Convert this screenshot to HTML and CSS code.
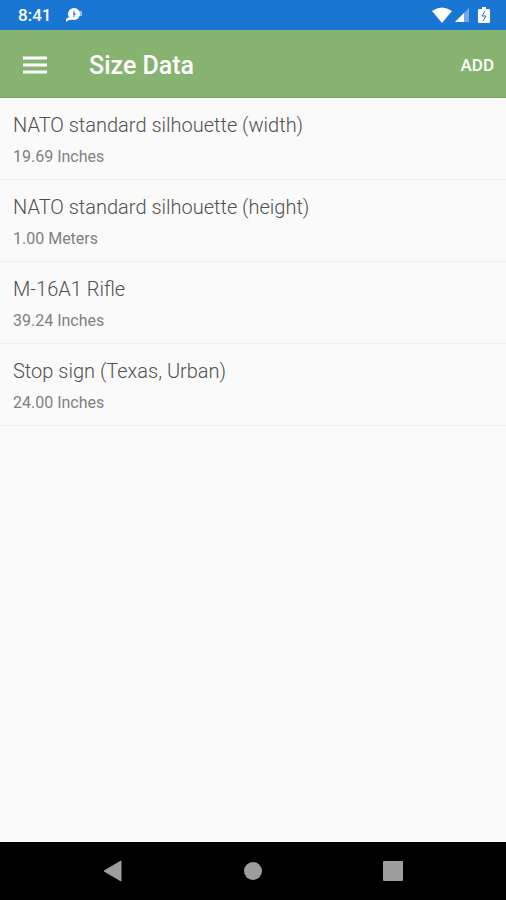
FILE: index.html
```html
<!DOCTYPE html>
<html lang="en">

<head>
    <meta charset="UTF-8">
    <meta name="viewport" content="width=device-width, initial-scale=1.0">
    <title>Size Data</title>
    <link rel="stylesheet" href="styles.css">
</head>

<body>
    <div class="status flex">
        <span class="time">8:41</span>
        <svg class="notice" width="18" height="16" viewBox="0 0 18 16">
            <path d="M1 15v-3l3-2 3 3-3 0z" fill="#fff" />
            <path d="M14 4h3v5h-3z" fill="#8bbcec" />
            <circle cx="9" cy="7" r="6" fill="#fff" />
            <path d="M9 4v6M8 7h3" fill="none" stroke="#1976d2" />
        </svg>
        <div class="status-icons flex">
            <svg width="20" height="16" viewBox="0 0 20 16">
                <path d="M0 4Q10-3 20 4L10 16z" fill="#fff" />
            </svg>
            <svg width="14" height="14" viewBox="0 0 14 14">
                <path d="M14 0v14H0z" fill="#74aae4" />
                <path d="M9 5v9H0z" fill="#fff" />
            </svg>
            <svg class="battery" width="12" height="16" viewBox="0 0 12 16">
                <path d="M4 0h4v2h3q1 0 1 1v12q0 1-1 1H1q-1 0-1-1V3q0-1 1-1h3z" fill="#fff" />
                <path d="M7 4L4 9h4l-3 5" fill="none" stroke="#1976d2" />
            </svg>
        </div>
    </div>
    <header class="flex">
        <button class="menu" type="button" aria-label="Menu">
            <svg width="24" height="18" viewBox="0 0 24 18">
                <path d="M0 2h24M0 9h24M0 16h24" stroke="#fff" stroke-width="3" />
            </svg>
        </button>
        <h1>Size Data</h1>
        <button class="add" type="button">ADD</button>
    </header>
    <main>
        <ul>
            <li>
                <h2>NATO standard silhouette (width)</h2>
                <p>19.69 Inches</p>
            </li>
            <li>
                <h2>NATO standard silhouette (height)</h2>
                <p>1.00 Meters</p>
            </li>
            <li>
                <h2>M-16A1 Rifle</h2>
                <p>39.24 Inches</p>
            </li>
            <li>
                <h2>Stop sign (Texas, Urban)</h2>
                <p>24.00 Inches</p>
            </li>
        </ul>
    </main>
    <nav class="flex">
        <button type="button" aria-label="Back">
            <svg width="20" height="22" viewBox="0 0 20 22">
                <path d="M18 1v20L1 11z" fill="#9e9e9e" stroke="#9e9e9e" stroke-linejoin="round" />
            </svg>
        </button>
        <button type="button" aria-label="Home">
            <svg width="20" height="20" viewBox="0 0 20 20">
                <circle cx="10" cy="10" r="9" fill="#9e9e9e" />
            </svg>
        </button>
        <button type="button" aria-label="Recent apps">
            <svg width="20" height="20" viewBox="0 0 20 20">
                <rect width="20" height="20" rx="1" fill="#9e9e9e" />
            </svg>
        </button>
    </nav>
</body>

</html>
```

FILE: styles.css
```css
* {
    margin: 0;
    padding: 0;
    box-sizing: border-box;
}

body {
    display: flex;
    flex-direction: column;
    min-height: 100vh;
    background: #fafafa;
    font-family: Roboto, "Liberation Sans", sans-serif;
}

.flex {
    display: flex;
    align-items: center;
}

svg {
    display: block;
}

button {
    border: none;
    background: none;
    font-family: inherit;
}

.status {
    height: 30px;
    padding: 0 16px 0 18px;
    background: #1976d2;
    color: white;
}

.time {
    font-size: 17px;
    font-weight: 500;
}

.notice {
    margin-left: 14px;
}

.status-icons {
    margin-left: auto;
    gap: 3px;
}

.battery {
    margin-left: 6px;
}

header {
    height: 68px;
    padding: 2px 12px 0 23px;
    background: #86b370;
    border-bottom: 1px solid #79a265;
    color: white;
}

h1 {
    margin-left: 42px;
    padding-top: 2px;
    font-size: 25px;
    font-weight: 500;
}

.add {
    margin-left: auto;
    color: white;
    font-size: 17px;
    font-weight: 500;
}

main {
    flex: 1;
}

li {
    list-style: none;
    height: 82px;
    padding: 14px 13px 0;
    border-bottom: 1px solid #eeeeee;
}

h2 {
    color: #505050;
    font-size: 20px;
    font-weight: 300;
    line-height: 26px;
}

li p {
    margin-top: 9px;
    color: #808080;
    font-size: 16px;
    font-weight: 400;
    line-height: 20px;
}

nav {
    height: 58px;
    justify-content: center;
    gap: 120px;
    background: black;
}
```
